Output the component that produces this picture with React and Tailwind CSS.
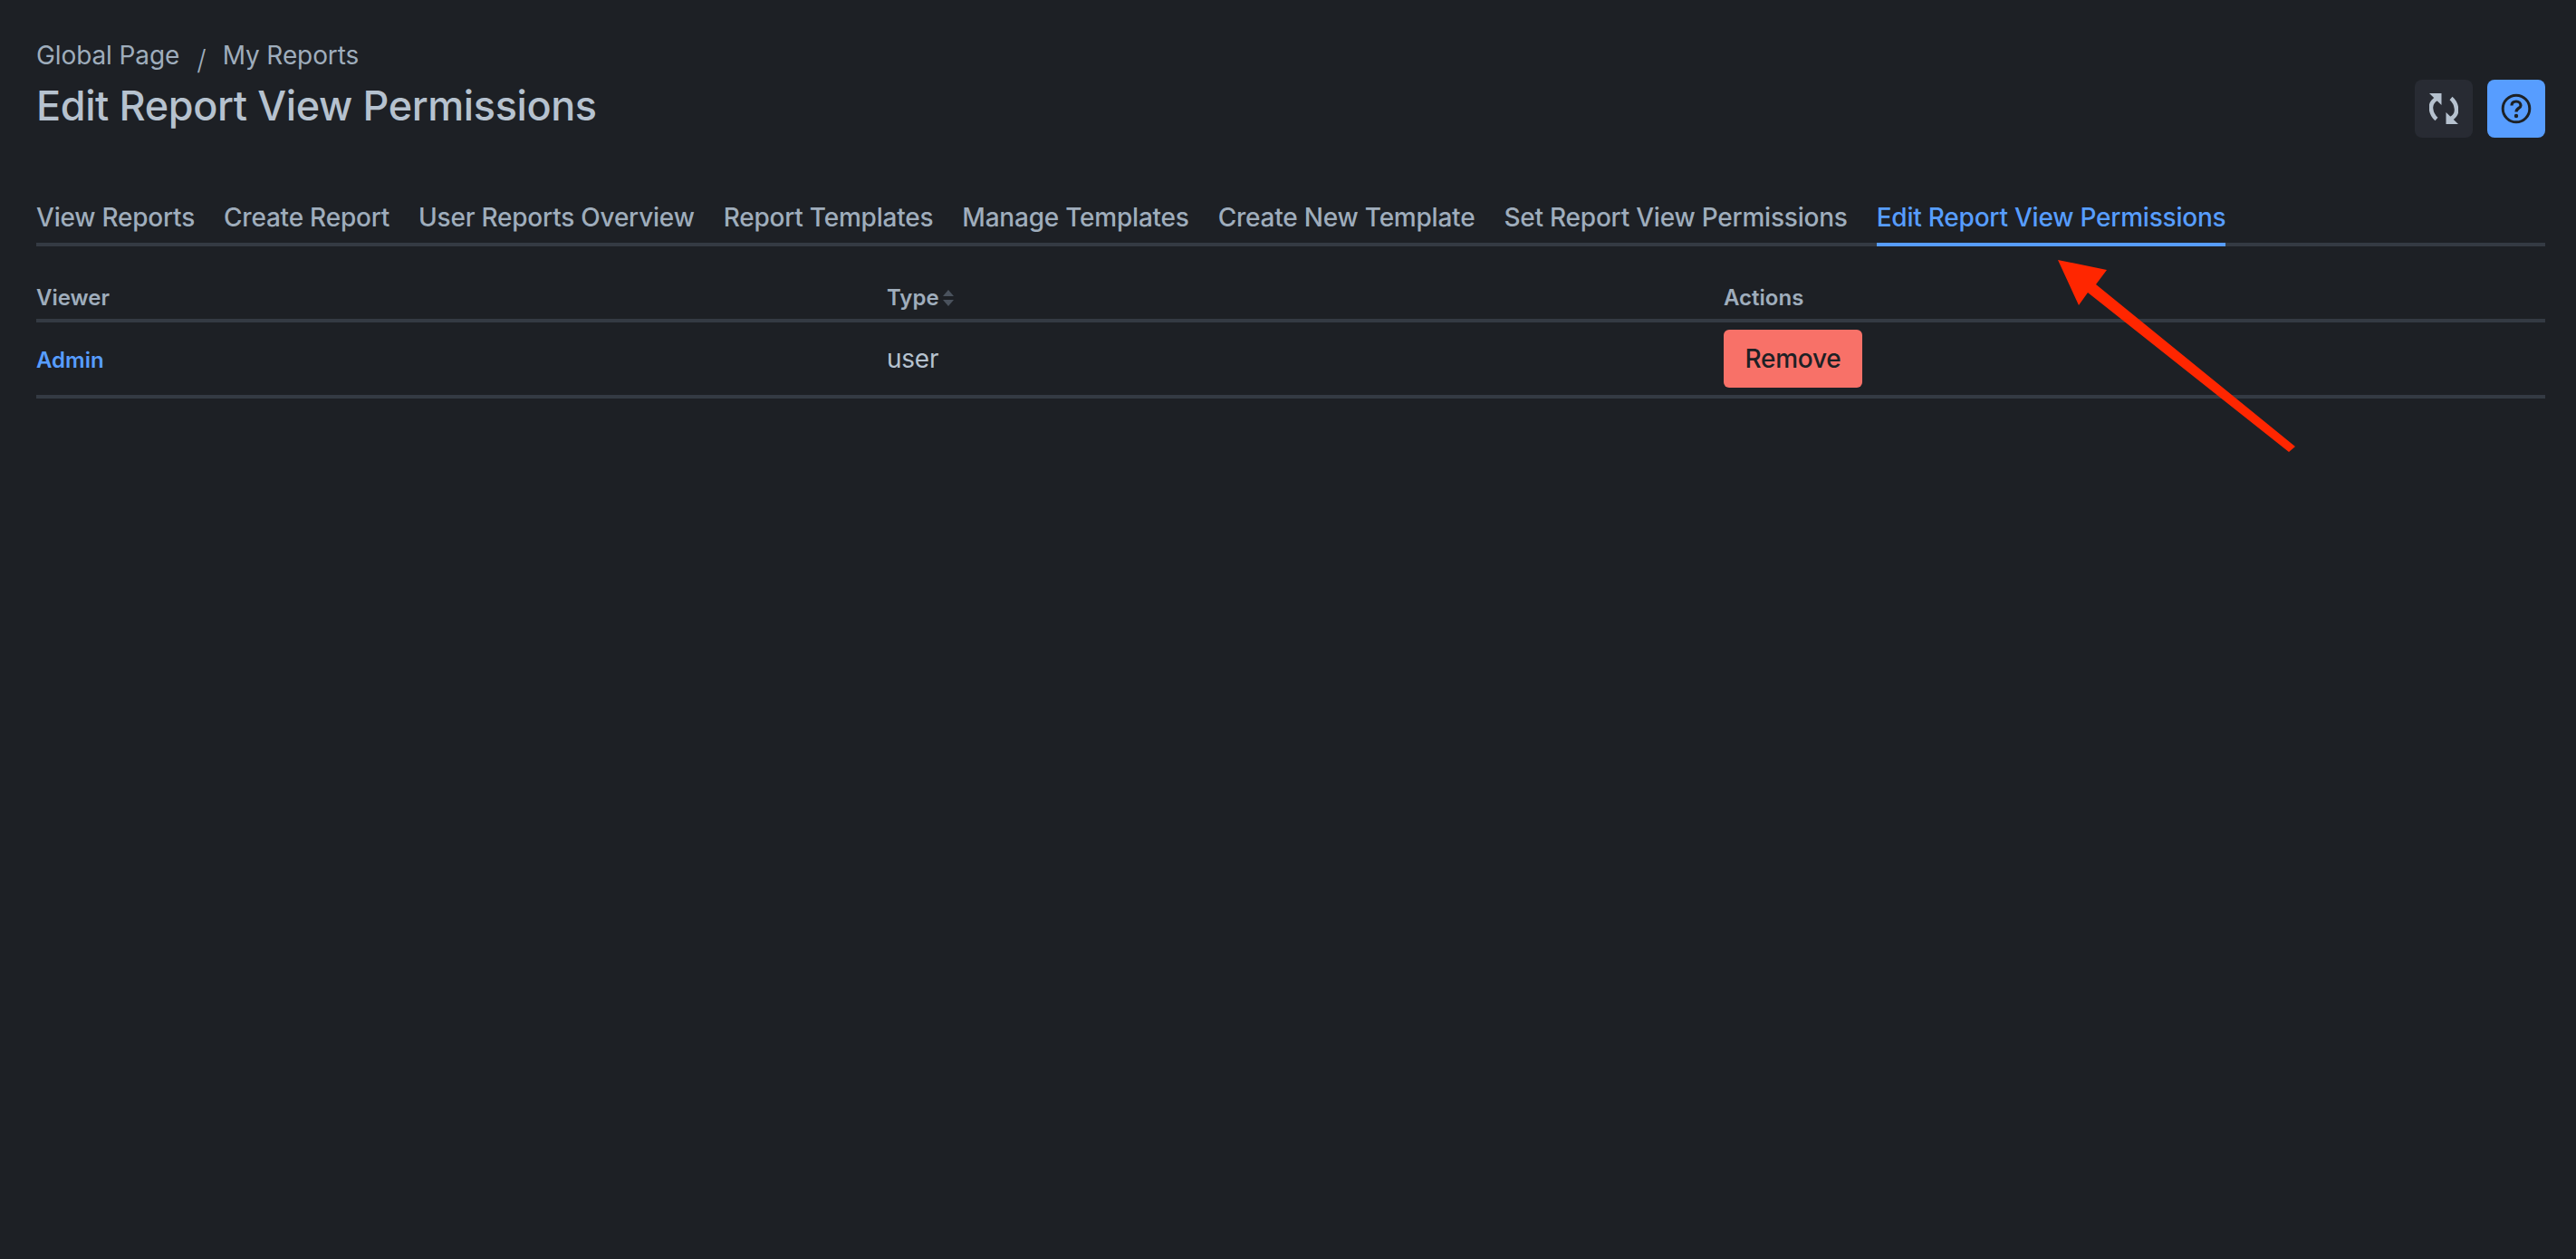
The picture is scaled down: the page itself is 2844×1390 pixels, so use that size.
const tabs = [
  "View Reports",
  "Create Report",
  "User Reports Overview",
  "Report Templates",
  "Manage Templates",
  "Create New Template",
  "Set Report View Permissions",
];

const RefreshIcon = () => (
  <svg width="32" height="34" viewBox="0 0 32 34" fill="none">
    <path d="M8 6 C3 9 1.5 13 2 17 C2.5 22 4.5 25.5 8 28.5" stroke="#b6c2cf" strokeWidth="4.6" />
    <path d="M0 0 H13.5 V13 Z" fill="#b6c2cf" />
    <path d="M24 28 C29 25 30.5 21 30 17 C29.5 12 27.5 8.5 24 5.5" stroke="#b6c2cf" strokeWidth="4.6" />
    <path d="M32 34 H18.5 V21 Z" fill="#b6c2cf" />
  </svg>
);

const HelpIcon = () => (
  <svg width="36" height="36" viewBox="0 0 36 36" fill="none" stroke="#1d2125">
    <circle cx="18" cy="18" r="14.8" strokeWidth="3" />
    <path
      d="M13 14.5 C13 11.5 15 10 18 10 C21 10 23 12 23 14.5 C23 17.5 18 17.5 18 21.5"
      strokeWidth="3.2"
    />
    <circle cx="18" cy="26" r="2.2" fill="#1d2125" stroke="none" />
  </svg>
);

const SortIcon = () => (
  <svg width="12" height="18" viewBox="0 0 12 18" className="ml-1">
    <path d="M6 0 L12 7 H0 Z" fill="#4a525d" />
    <path d="M0 11 H12 L6 18 Z" fill="#4a525d" />
  </svg>
);

// red annotation arrow laid over the page
const Arrow = () => (
  <svg
    className="absolute top-0 left-0 pointer-events-none"
    width="2844"
    height="1390"
    viewBox="0 0 2844 1390"
  >
    <path
      d="M2272 287 L2326 298 L2314 314 L2534 493 L2527 499 L2305 323 L2295 337 Z"
      fill="#ff2600"
    />
  </svg>
);

export default function App() {
  return (
    <div className="relative min-h-[1390px] w-full bg-[#1d2025] font-['Inter',sans-serif] text-[#9fadbc] pl-10 pr-[34px] overflow-hidden">
      <div className="flex items-start justify-between h-[208px]">
        <div className="pt-[41px]">
          <div className="flex items-center h-10 text-[28px] leading-10 tracking-[-0.1px]">
            <span>Global Page</span>
            <span className="ml-[19px] mr-[18px] mt-[10px] font-light text-[30px]">/</span>
            <span>My Reports</span>
          </div>
          <h1 className="text-[45px] leading-[72px] font-medium text-[#b6c2cf] tracking-[-0.4px]">
            Edit Report View Permissions
          </h1>
        </div>
        <div className="flex gap-4 mt-[88px]">
          <button className="flex items-center justify-center w-16 h-16 rounded-lg bg-[#282b33]">
            <RefreshIcon />
          </button>
          <button className="flex items-center justify-center w-16 h-16 rounded-lg bg-[#579dff]">
            <HelpIcon />
          </button>
        </div>
      </div>

      <div className="flex gap-8 h-16 border-b-4 border-[#343a43] text-[28px] font-medium tracking-[-0.22px]">
        {tabs.map((t) => (
          <div key={t} className="h-16 leading-[64px]">
            {t}
          </div>
        ))}
        <div className="h-16 leading-[64px] text-[#579dff] border-b-4 border-[#579dff]">
          Edit Report View Permissions
        </div>
      </div>

      <div className="grid grid-cols-[939px_924px_1fr] items-center h-[84px] pt-[34px] border-b-4 border-[#343a43] text-[24px] font-semibold">
        <div>Viewer</div>
        <div className="flex items-center">
          Type
          <SortIcon />
        </div>
        <div>Actions</div>
      </div>
      <div className="grid grid-cols-[939px_924px_1fr] items-center h-[84px] border-b-4 border-[#343a43]">
        <div className="pt-[3px] text-[24px] font-semibold text-[#579dff]">Admin</div>
        <div className="text-[28px] text-[#b6c2cf] tracking-[-0.25px]">user</div>
        <div>
          <button className="h-16 w-[153px] rounded-md bg-[#f87168] text-[28px] font-medium text-[#1d2125] tracking-[-0.25px]">
            Remove
          </button>
        </div>
      </div>

      <Arrow />
    </div>
  );
}
